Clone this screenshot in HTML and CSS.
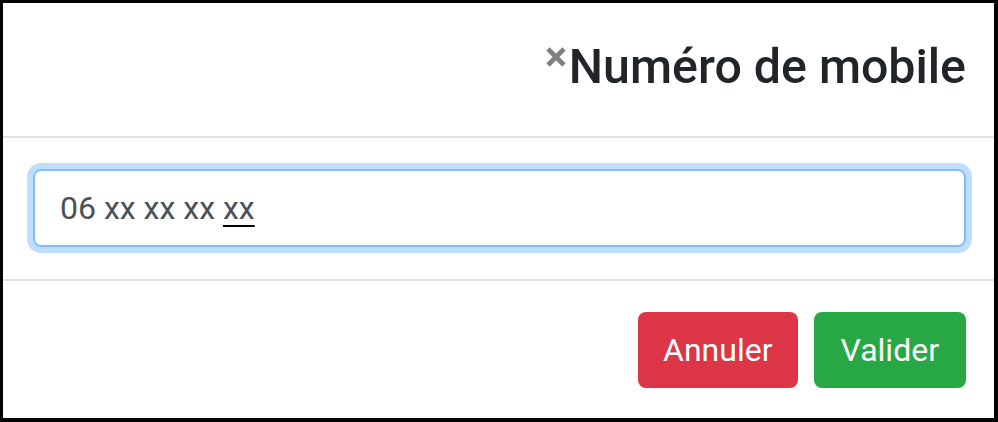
FILE: index.html
```html
<!DOCTYPE html>
<html lang="fr">
<head>
<meta charset="utf-8">
<title>Numéro de mobile</title>
<link rel="stylesheet" href="styles.css">
</head>
<body>
<div class="modal">
  <div class="modal-header">
    <button class="close" type="button" aria-label="Fermer">
      <svg width="22" height="22" viewBox="0 0 22 22"><path d="M3 3 L19 19 M19 3 L3 19" stroke="#7f7f7f" stroke-width="4.6" stroke-linecap="butt" fill="none"/></svg>
    </button>
    <h5 class="modal-title">Numéro de mobile</h5>
  </div>
  <div class="modal-body">
    <div class="form-control">06 xx xx xx <span class="compose">xx</span></div>
  </div>
  <div class="modal-footer">
    <button class="btn btn-danger" type="button">Annuler</button>
    <button class="btn btn-success" type="button">Valider</button>
  </div>
</div>
</body>
</html>
```
FILE: styles.css
```css
* { box-sizing: border-box; }
html, body { margin: 0; padding: 0; background: #fff; }
body { font-family: Roboto, "Liberation Sans", sans-serif; color: #212529; }

.modal {
  width: 998px;
  height: 422px;
  border-style: solid;
  border-color: #000;
  border-width: 3px 4px 4px 3px;
  display: flex;
  flex-direction: column;
  background: #fff;
}

.modal-header {
  display: flex;
  justify-content: flex-end;
  align-items: flex-start;
  padding: 28px 28px 33px 28px;
  border-bottom: 2px solid #dee2e6;
}

.close {
  border: 0;
  background: transparent;
  padding: 0;
  margin: 15px 2px 0 0;
  width: 22px;
  height: 22px;
  display: block;
  cursor: pointer;
}
.close svg { display: block; }

.modal-title {
  margin: 0;
  font-size: 48.3px;
  font-weight: 500;
  line-height: 72px;
  color: #212529;
}

.modal-body {
  padding: 31px 28px 32px 30px;
  border-bottom: 2px solid #dee2e6;
}

.form-control {
  height: 78px;
  border: 2px solid #80bdff;
  border-radius: 8px;
  box-shadow: 0 0 0 6px rgba(0, 123, 255, 0.25);
  padding: 0 25px;
  display: flex;
  align-items: center;
  white-space: pre;
  font-size: 32px;
  color: #495057;
}
.compose {
  text-decoration: underline;
  text-decoration-color: #000;
  text-decoration-thickness: 2px;
  text-underline-offset: 6px;
}

.modal-footer {
  flex: 1;
  display: flex;
  justify-content: flex-end;
  align-items: flex-start;
  gap: 16px;
  padding: 31px 28px 0 28px;
}

.btn {
  height: 76px;
  border: 0;
  border-radius: 8px;
  padding: 0 25px;
  font-family: Roboto, "Liberation Sans", sans-serif;
  font-size: 32px;
  color: #fff;
  cursor: pointer;
}
.btn-danger { background: #dc3545; }
.btn-success { background: #28a745; padding: 0 27px; }
```
